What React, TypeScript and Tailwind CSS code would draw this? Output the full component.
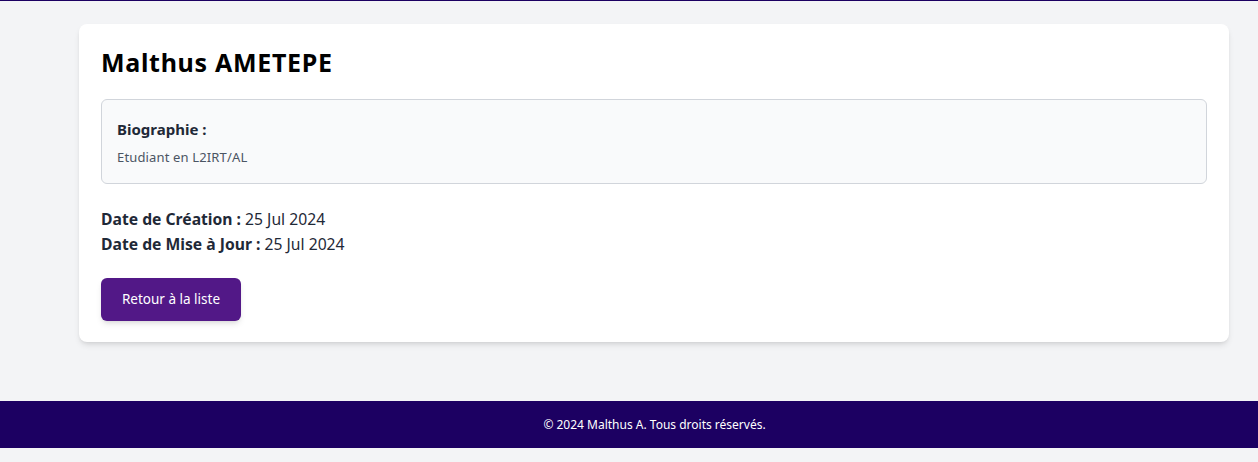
export default function App() {
  return (
    <div className="min-h-[462px] bg-[#f3f4f6] flex flex-col" style={{ fontFamily: '"Noto Sans", "Open Sans", sans-serif' }}>
      <div className="h-px bg-[#1c0062]" />
      <main className="pl-[79px] pr-[29px] pt-[23px] pb-[59px]">
        <div className="bg-white rounded-lg shadow-md px-[22px] pt-[20px] pb-[21px]">
          <h1 className="text-[25px] font-bold text-black leading-[36px] tracking-[0.7px]">Malthus AMETEPE</h1>
          <div className="mt-[19px] bg-[#f9fafb] border border-[#d1d5db] rounded-md px-[15px] pt-[18px] pb-[16px]">
            <h2 className="text-[15px] font-bold text-[#1f2937] leading-[22px]">Biographie :</h2>
            <p className="mt-[7px] text-[13px] tracking-[0.15px] text-[#4b5563] leading-[20px]">Etudiant en L2IRT/AL</p>
          </div>
          <div className="mt-[23px] text-[15.7px] text-[#1f2937] leading-[25px]">
            <p><span className="font-bold">Date de Création :</span> 25 Jul 2024</p>
            <p><span className="font-bold">Date de Mise à Jour :</span> 25 Jul 2024</p>
          </div>
          <button className="mt-[21px] w-[140px] h-[43px] bg-[#521887] text-white text-[13.5px] rounded-md shadow-md">
            Retour à la liste
          </button>
        </div>
      </main>
      <footer className="h-[47px] bg-[#1c0062] flex items-center justify-center pl-[51px] text-white text-[12px]">
        © 2024 Malthus A. Tous droits réservés.
      </footer>
      <div className="flex-1" />
    </div>
  );
}
